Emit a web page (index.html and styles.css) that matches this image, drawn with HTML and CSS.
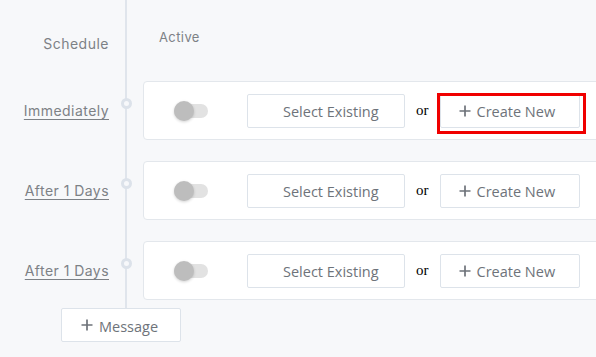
FILE: index.html
```html
<!DOCTYPE html>
<html lang="en">
<head>
<meta charset="utf-8">
<title>Schedule</title>
<link rel="stylesheet" href="styles.css">
</head>
<body>
<div class="page">
  <div class="timeline">
    <div class="head-label">Schedule</div>
    <div class="marker-col"></div>
    <div class="head-active">Active</div>

    <a class="step-label" href="#">Immediately</a>
    <div class="marker-col"><span class="ring"></span></div>
    <div class="card">
      <span class="toggle"><span class="knob"></span></span>
      <button class="btn btn-select">Select Existing</button>
      <span class="or">or</span>
      <button class="btn btn-create highlighted"><svg class="plus" viewBox="0 0 12 12" width="12" height="12"><path d="M6 0.5V11.5M0.5 6H11.5"/></svg>Create New</button>
    </div>

    <a class="step-label" href="#">After 1 Days</a>
    <div class="marker-col"><span class="ring"></span></div>
    <div class="card">
      <span class="toggle"><span class="knob"></span></span>
      <button class="btn btn-select">Select Existing</button>
      <span class="or">or</span>
      <button class="btn btn-create"><svg class="plus" viewBox="0 0 12 12" width="12" height="12"><path d="M6 0.5V11.5M0.5 6H11.5"/></svg>Create New</button>
    </div>

    <a class="step-label" href="#">After 1 Days</a>
    <div class="marker-col"><span class="ring"></span></div>
    <div class="card">
      <span class="toggle"><span class="knob"></span></span>
      <button class="btn btn-select">Select Existing</button>
      <span class="or">or</span>
      <button class="btn btn-create"><svg class="plus" viewBox="0 0 12 12" width="12" height="12"><path d="M6 0.5V11.5M0.5 6H11.5"/></svg>Create New</button>
    </div>
  </div>
  <button class="btn btn-message"><svg class="plus" viewBox="0 0 12 12" width="12" height="12"><path d="M6 0.5V11.5M0.5 6H11.5"/></svg>Message</button>
</div>
</body>
</html>
```
FILE: styles.css
```css
html, body {
  margin: 0;
  padding: 0;
  background: #f7f8fa;
  overflow: hidden;
}
.page {
  width: 596px;
  height: 357px;
  overflow: hidden;
}
.timeline {
  position: relative;
  display: grid;
  grid-template-columns: 117px 18px 480px;
  grid-template-rows: 60px 59px 59px 59px;
  row-gap: 21px;
}
.timeline::before {
  content: "";
  position: absolute;
  left: 125px;
  top: 0;
  width: 2px;
  height: 308px;
  background: #e0e5ec;
}
.head-label {
  font-family: Inter, "Noto Sans", sans-serif;
  font-size: 14px;
  line-height: 20px;
  color: #7d8186;
  text-align: right;
  padding: 34px 8px 0 0;
  letter-spacing: 0.5px;
}
.head-active {
  font-family: Inter, "Noto Sans", sans-serif;
  font-size: 13px;
  line-height: 20px;
  color: #7d8186;
  padding: 27px 0 0 24px;
  letter-spacing: 0.4px;
}
.step-label {
  align-self: center;
  justify-self: end;
  margin-right: 8px;
  font-family: Inter, "Noto Sans", sans-serif;
  font-size: 14px;
  line-height: 20px;
  color: #7d8186;
  text-decoration: underline;
  text-underline-offset: 3px;
  letter-spacing: 0.45px;
}
.marker-col {
  position: relative;
  z-index: 1;
}
.ring {
  position: absolute;
  left: 3.5px;
  top: 17px;
  width: 11px;
  height: 11px;
  box-sizing: border-box;
  border: 3px solid #dce2ea;
  border-radius: 50%;
  background: #f7f8fa;
}
.card {
  margin-left: 8px;
  box-sizing: border-box;
  height: 59px;
  background: #fff;
  border: 1px solid #e3e7ec;
  border-radius: 4px;
  display: flex;
  align-items: center;
  gap: 11px;
  padding-left: 30px;
}
.toggle {
  position: relative;
  width: 34px;
  height: 14px;
  border-radius: 7px;
  background: #e2e2e2;
  margin-right: 28px;
}
.knob {
  position: absolute;
  left: 0;
  top: -3px;
  width: 20px;
  height: 20px;
  border-radius: 50%;
  background: #bdbdbd;
  box-shadow: 0 1px 3px rgba(0, 0, 0, 0.18);
}
.btn {
  height: 34px;
  box-sizing: border-box;
  border: 1px solid #dde3ea;
  border-radius: 2px;
  background: #fff;
  font-family: "Open Sans", sans-serif;
  font-size: 14.5px;
  color: #6e737a;
  display: inline-flex;
  align-items: center;
  justify-content: flex-start;
  gap: 6px;
  padding: 2px 0 0;
  cursor: pointer;
}
.btn-select {
  width: 158px;
  padding-left: 35px;
}
.btn-create {
  width: 140px;
  padding-left: 18px;
  position: relative;
}
.highlighted::after {
  content: "";
  position: absolute;
  left: -4px;
  top: -2px;
  right: -7px;
  bottom: -7px;
  border: 3px solid #f00000;
}
.or {
  font-family: "Liberation Serif", serif;
  font-size: 15px;
  color: #000;
}
.plus {
  width: 12px;
  height: 12px;
  flex: none;
  margin-top: -2px;
}
.plus path {
  stroke: #6e737a;
  stroke-width: 1.7;
  fill: none;
}
.btn-message {
  width: 120px;
  padding-left: 19px;
  margin: 8px 0 0 61px;
}
```
